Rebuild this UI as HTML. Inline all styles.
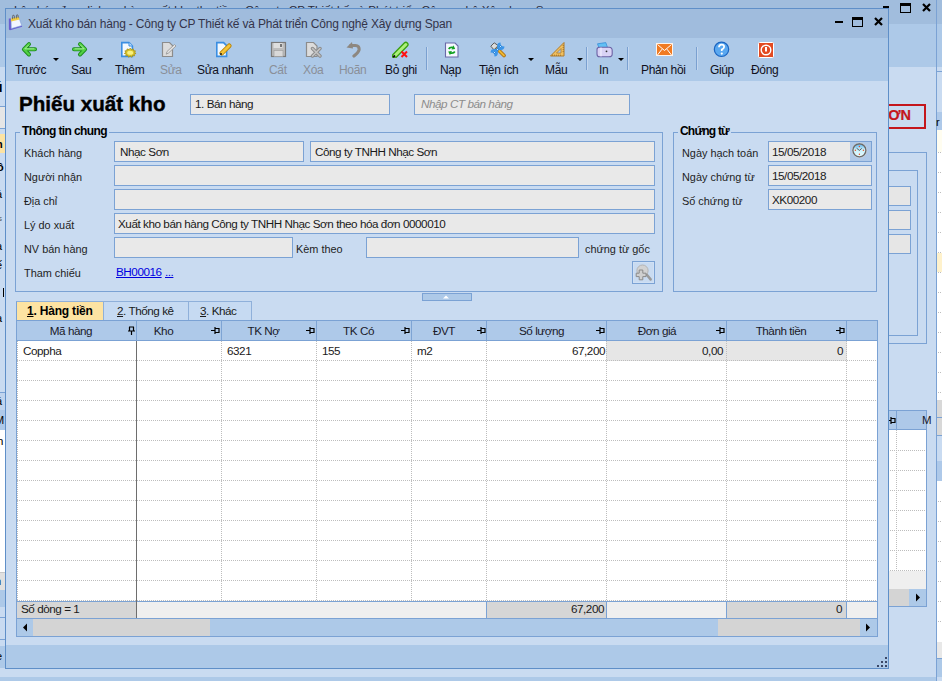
<!DOCTYPE html>
<html><head><meta charset="utf-8">
<style>
*{box-sizing:border-box;margin:0;padding:0}
html,body{width:942px;height:681px;overflow:hidden;background:#c9dbf1;font-family:"Liberation Sans",sans-serif;font-size:11.3px;color:#1a1a1a}
.a{position:absolute}
.t{position:absolute;white-space:nowrap;line-height:1}
.fld{position:absolute;background:#e9e9e9;border:1px solid #7ba2d4}
.lbl{position:absolute;white-space:nowrap;line-height:1;font-size:10.9px;color:#1e1e1e}
.tb{position:absolute;white-space:nowrap;line-height:1;font-size:12px;letter-spacing:-0.35px;color:#10101c;text-align:center;margin-top:0px}
.dis{color:#8a8f98}
.dd{position:absolute;width:0;height:0;border-left:3px solid transparent;border-right:3px solid transparent;border-top:3px solid #000}
.sep{position:absolute;width:2px;background:#7aa0d0;border-right:1px solid #c4d7ef}
.hd{position:absolute;top:321px;height:19px;background:#aec9e9;border-right:1px solid #7da3d4;text-align:center;font-size:10.9px;line-height:19px;color:#1a1a2a}
.pin{position:absolute;top:7px;width:8px;height:6px}
.vl{position:absolute;width:1px;top:341px;height:260px;background-image:linear-gradient(#bdbdbd 50%,transparent 50%);background-size:1px 2px}
.hl{position:absolute;left:17px;width:860px;height:1px;background-image:linear-gradient(90deg,#bdbdbd 50%,transparent 50%);background-size:2px 1px}
</style></head><body>

<!-- ===== background app ===== -->
<div class="a" style="left:0;top:0;width:942px;height:24px;background:#a1bddd"></div>
<div class="a" style="left:0;top:24px;width:942px;height:43px;background:#adc9e8"></div>
<div class="a" style="left:0;top:67px;width:942px;height:614px;background:#c9dbf1"></div>
<div class="a" style="left:936px;top:0px;width:1px;height:681px;background:#7ba2d4"></div>


<div class="t" style="left:14px;top:4px;font-size:11.7px;color:#2a2a3a">Lập hóa đơn dịch vụ kèm xuất kho thu tiền - Công ty CP Thiết kế và Phát triển Công nghệ Xây dựng Span</div>
<!-- bg app title buttons -->
<div class="a" style="left:883px;top:6px;width:6px;height:2px;background:#000"></div>
<div class="a" style="left:900px;top:3px;width:11px;height:10px;border:1px solid #000;border-top:3px solid #000"></div>
<svg class="a" style="left:922px;top:3px" width="9" height="9" viewBox="0 0 9 9"><path d="M1 1L8 8M8 1L1 8" stroke="#000" stroke-width="2.2"/></svg>
<!-- bg right content -->
<div class="a" style="left:888px;top:104px;width:38px;height:25px;border:2px solid #c4161c;border-left:none"></div>
<div class="t" style="left:851px;top:108px;width:60px;text-align:right;font-size:14.5px;font-weight:bold;color:#c4161c;-webkit-text-stroke:0.2px #c4161c">ĐƠN</div>
<div class="a" style="left:888px;top:152px;width:39px;height:192px;border:1px solid #7ba2d4;border-left:none"></div>
<div class="a" style="left:888px;top:170px;width:30px;height:166px;border:1px solid #7ba2d4;border-left:none"></div>
<div class="a" style="left:888px;top:186px;width:23px;height:20px;background:#e6e6e6;border:1px solid #7ba2d4;border-left:none"></div>
<div class="a" style="left:888px;top:210px;width:23px;height:20px;background:#e6e6e6;border:1px solid #7ba2d4;border-left:none"></div>
<div class="a" style="left:888px;top:234px;width:23px;height:20px;background:#e6e6e6;border:1px solid #7ba2d4;border-left:none"></div>
<div class="a" style="left:888px;top:410px;width:39px;height:197px;border:1px solid #7ba2d4;border-left:none;background:#fff"></div>
<div class="a" style="left:888px;top:411px;width:38px;height:19px;background:#aec9e9;border-bottom:1px solid #7ba2d4"></div>
<div class="a" style="left:896px;top:411px;width:1px;height:19px;background:#7ea4d4"></div>
<svg class="a" style="left:888px;top:417px" width="8" height="7" viewBox="0 0 8 7"><path d="M7 1V6M7 1.5H3V5.5H7M3 0V7M3 3.5H0" fill="none" stroke="#000" stroke-width="1.2"/></svg>
<div class="t" style="left:922px;top:415px;font-size:11.5px;color:#1a1a2a">M</div>
<div class="vl" style="left:896px;top:430px;height:141px"></div>
<div class="a" style="left:888px;top:450px;width:38px;height:1px;background-image:linear-gradient(90deg,#bdbdbd 50%,transparent 50%);background-size:2px 1px"></div>
<div class="a" style="left:888px;top:470px;width:38px;height:1px;background-image:linear-gradient(90deg,#bdbdbd 50%,transparent 50%);background-size:2px 1px"></div>
<div class="a" style="left:888px;top:490px;width:38px;height:1px;background-image:linear-gradient(90deg,#bdbdbd 50%,transparent 50%);background-size:2px 1px"></div>
<div class="a" style="left:888px;top:510px;width:38px;height:1px;background-image:linear-gradient(90deg,#bdbdbd 50%,transparent 50%);background-size:2px 1px"></div>
<div class="a" style="left:888px;top:530px;width:38px;height:1px;background-image:linear-gradient(90deg,#bdbdbd 50%,transparent 50%);background-size:2px 1px"></div>
<div class="a" style="left:888px;top:550px;width:38px;height:1px;background-image:linear-gradient(90deg,#bdbdbd 50%,transparent 50%);background-size:2px 1px"></div>
<div class="a" style="left:888px;top:570px;width:38px;height:1px;background-image:linear-gradient(90deg,#bdbdbd 50%,transparent 50%);background-size:2px 1px"></div>
<div class="a" style="left:888px;top:571px;width:38px;height:18px;background:#efefef"></div>
<div class="a" style="left:888px;top:589px;width:38px;height:17px;background:#adc9e8"></div>
<div class="a" style="left:888px;top:589px;width:21px;height:17px;background:#d4d4d4"></div>
<svg class="a" style="left:915px;top:593px" width="6" height="9" viewBox="0 0 6 9"><path d="M1 0.5V8.5L5 4.5Z" fill="#000"/></svg>
<!-- far right strip -->
<div class="a" style="left:937px;top:71px;width:5px;height:1px;background:#7ba2d4"></div>
<div class="a" style="left:937px;top:112px;width:5px;height:18px;background:#aec9e9"></div>
<div class="t" style="left:936px;top:117px;font-size:11px;color:#000">r</div>
<div class="a" style="left:937px;top:130px;width:5px;height:270px;background:#fff"></div>
<div class="a" style="left:937px;top:130px;width:5px;height:22px;background:#fffdf0"></div>
<div class="a" style="left:937px;top:253px;width:5px;height:19px;background:#fff2cc"></div>
<div class="a" style="left:937px;top:400px;width:5px;height:17px;background:#d8d8d8"></div>
<div class="a" style="left:937px;top:417px;width:5px;height:1px;background:#7ba2d4"></div>
<div class="a" style="left:937px;top:418px;width:5px;height:17px;background:#d8d8d8"></div>
<div class="a" style="left:937px;top:435px;width:5px;height:1px;background:#7ba2d4"></div>
<div class="a" style="left:937px;top:461px;width:5px;height:20px;background:#aec9e9"></div>
<div class="a" style="left:937px;top:481px;width:5px;height:161px;background:#fff"></div>
<div class="a" style="left:937px;top:642px;width:5px;height:16px;background:#e8e8e8"></div>
<div class="a" style="left:937px;top:658px;width:5px;height:23px;background:#adc9e8"></div>
<div class="a" style="left:938px;top:152px;width:4px;height:1px;background-image:linear-gradient(90deg,#bdbdbd 50%,transparent 50%);background-size:2px 1px"></div><div class="a" style="left:938px;top:172px;width:4px;height:1px;background-image:linear-gradient(90deg,#bdbdbd 50%,transparent 50%);background-size:2px 1px"></div><div class="a" style="left:938px;top:192px;width:4px;height:1px;background-image:linear-gradient(90deg,#bdbdbd 50%,transparent 50%);background-size:2px 1px"></div><div class="a" style="left:938px;top:212px;width:4px;height:1px;background-image:linear-gradient(90deg,#bdbdbd 50%,transparent 50%);background-size:2px 1px"></div><div class="a" style="left:938px;top:232px;width:4px;height:1px;background-image:linear-gradient(90deg,#bdbdbd 50%,transparent 50%);background-size:2px 1px"></div><div class="a" style="left:938px;top:252px;width:4px;height:1px;background-image:linear-gradient(90deg,#bdbdbd 50%,transparent 50%);background-size:2px 1px"></div><div class="a" style="left:938px;top:272px;width:4px;height:1px;background-image:linear-gradient(90deg,#bdbdbd 50%,transparent 50%);background-size:2px 1px"></div><div class="a" style="left:938px;top:292px;width:4px;height:1px;background-image:linear-gradient(90deg,#bdbdbd 50%,transparent 50%);background-size:2px 1px"></div><div class="a" style="left:938px;top:312px;width:4px;height:1px;background-image:linear-gradient(90deg,#bdbdbd 50%,transparent 50%);background-size:2px 1px"></div><div class="a" style="left:938px;top:332px;width:4px;height:1px;background-image:linear-gradient(90deg,#bdbdbd 50%,transparent 50%);background-size:2px 1px"></div><div class="a" style="left:938px;top:352px;width:4px;height:1px;background-image:linear-gradient(90deg,#bdbdbd 50%,transparent 50%);background-size:2px 1px"></div><div class="a" style="left:938px;top:372px;width:4px;height:1px;background-image:linear-gradient(90deg,#bdbdbd 50%,transparent 50%);background-size:2px 1px"></div><div class="a" style="left:938px;top:392px;width:4px;height:1px;background-image:linear-gradient(90deg,#bdbdbd 50%,transparent 50%);background-size:2px 1px"></div><div class="a" style="left:938px;top:501px;width:4px;height:1px;background-image:linear-gradient(90deg,#bdbdbd 50%,transparent 50%);background-size:2px 1px"></div><div class="a" style="left:938px;top:521px;width:4px;height:1px;background-image:linear-gradient(90deg,#bdbdbd 50%,transparent 50%);background-size:2px 1px"></div><div class="a" style="left:938px;top:541px;width:4px;height:1px;background-image:linear-gradient(90deg,#bdbdbd 50%,transparent 50%);background-size:2px 1px"></div><div class="a" style="left:938px;top:561px;width:4px;height:1px;background-image:linear-gradient(90deg,#bdbdbd 50%,transparent 50%);background-size:2px 1px"></div><div class="a" style="left:938px;top:581px;width:4px;height:1px;background-image:linear-gradient(90deg,#bdbdbd 50%,transparent 50%);background-size:2px 1px"></div><div class="a" style="left:938px;top:601px;width:4px;height:1px;background-image:linear-gradient(90deg,#bdbdbd 50%,transparent 50%);background-size:2px 1px"></div><div class="a" style="left:938px;top:621px;width:4px;height:1px;background-image:linear-gradient(90deg,#bdbdbd 50%,transparent 50%);background-size:2px 1px"></div>
<!-- below dialog -->
<div class="a" style="left:0;top:677px;width:937px;height:4px;background:#adc9e8"></div>
<div class="a" style="left:936px;top:677px;width:1px;height:4px;background:#7ba2d4"></div>
<div class="a" style="left:937px;top:658px;width:5px;height:1px;background:#7ba2d4"></div>
<div class="a" style="left:937px;top:677px;width:5px;height:4px;background:#c9dbf1"></div>




<!-- left strip bg -->
<div class="t" style="left:-6px;top:80px;font-size:14px;font-weight:bold;color:#000">ú</div>
<div class="a" style="left:0;top:106px;width:5px;height:23px;background:#e6e6e6;border-top:1px solid #7ba2d4;border-bottom:1px solid #7ba2d4"></div>
<div class="a" style="left:0;top:134px;width:5px;height:19px;background:#fde3a2"></div>
<div class="t" style="left:-4px;top:139px;font-size:11px;font-weight:bold;color:#000">n</div>
<div class="t" style="left:-3px;top:162px;font-size:11px;font-weight:bold;color:#000">ô</div>
<div class="t" style="left:-4px;top:189px;font-size:11px;color:#000">á</div>
<div class="t" style="left:-2px;top:215px;font-size:8px;color:#555">s</div>
<div class="t" style="left:-4px;top:241px;font-size:11px;color:#000">a</div>
<div class="t" style="left:-4px;top:260px;font-size:11px;color:#000">ế</div>
<div class="a" style="left:3px;top:288px;width:1px;height:9px;background:#000"></div>
<div class="t" style="left:-4px;top:313px;font-size:11px;color:#000">a</div>
<div class="a" style="left:0;top:392px;width:5px;height:1px;background:#7ba2d4"></div>
<div class="a" style="left:0;top:393px;width:5px;height:17px;background:#c0d4ee"></div>
<div class="t" style="left:-4px;top:396px;font-size:11px;color:#000">ầ</div>
<div class="a" style="left:0;top:410px;width:5px;height:20px;background:#aec9e9"></div>
<div class="t" style="left:-5px;top:415px;font-size:11px;color:#000">M</div>
<div class="a" style="left:0;top:430px;width:5px;height:142px;background:#fff"></div>
<div class="t" style="left:-3px;top:436px;font-size:11.5px;color:#000">h</div>
<div class="a" style="left:0;top:572px;width:5px;height:18px;background:#e0e0e0;border-top:1px solid #c8c8c8"></div>
<div class="t" style="left:-5px;top:576px;font-size:11px;color:#000">n</div>
<div class="a" style="left:0;top:590px;width:5px;height:17px;background:#adc9e8"></div>
<div class="a" style="left:0;top:617px;width:5px;height:1px;background:#7ba2d4"></div>
<div class="a" style="left:0;top:639px;width:5px;height:1px;background:#7ba2d4"></div>
<div class="a" style="left:0;top:646px;width:5px;height:22px;background:#adc9e8"></div>
<div class="t" style="left:-4px;top:651px;font-size:11px;color:#000">e</div>

<!-- ===== dialog ===== -->
<div class="a" style="left:5px;top:8px;width:884px;height:661px;border:1px solid #5f8fc8;background:#c9dbf1"></div>
<div class="a" style="left:6px;top:9px;width:882px;height:29px;background:#a0bcdd"></div>
<div class="a" style="left:6px;top:38px;width:882px;height:43px;background:#adc9e8"></div>
<div class="a" style="left:6px;top:645px;width:882px;height:23px;background:#adc9e8"></div>

<div class="t" style="left:28px;top:18px;font-size:12px;letter-spacing:-0.18px;color:#34344a">Xuất kho bán hàng - Công ty CP Thiết kế và Phát triển Công nghệ Xây dựng Span</div>


<!-- title icon -->
<svg class="a" style="left:8px;top:14px" width="17" height="17" viewBox="0 0 17 17"><path d="M0.8 4.6L3 4.4L3.3 14.6L13.8 11.6L14.2 12.8L2 16.2L0.9 15.6Z" fill="#6a5ed0"/><path d="M3 4.4L10.6 2.8L13.8 11.6L3.3 14.6Z" fill="#f2f6ff" stroke="#7a9ad8" stroke-width=".6"/><path d="M3 4.4L10.6 2.8L11.6 5.6L3.1 7.4Z" fill="#f2cc40"/><path d="M4.6 5.2V2.4Q4.6 .8 5.8 1.2Q6.6 1.5 6.4 4.5M8.4 4.4V1.8Q8.6 .4 9.7 .9Q10.3 1.3 10.2 3.8" fill="none" stroke="#606060" stroke-width=".9"/></svg>
<!-- title buttons -->
<div class="a" style="left:835px;top:21px;width:8px;height:2px;background:#000"></div>
<div class="a" style="left:852px;top:17px;width:11px;height:10px;border:1px solid #000;border-top:3px solid #000"></div>
<svg class="a" style="left:874px;top:17px" width="9" height="9" viewBox="0 0 9 9"><path d="M1 1L8 8M8 1L1 8" stroke="#000" stroke-width="2.2"/></svg>

<!-- toolbar icons -->
<svg class="a" style="left:21px;top:41px" width="17" height="17" viewBox="0 0 17 17"><path d="M8 3.1L2.9 8.3L8 13.5M3.4 8.3H14" fill="none" stroke="#1c8a1c" stroke-width="4" stroke-linecap="round" stroke-linejoin="round"/><path d="M8 3.1L2.9 8.3L8 13.5M3.4 8.3H14" fill="none" stroke="#52d043" stroke-width="2.2" stroke-linecap="round" stroke-linejoin="round"/><path d="M7.6 4L3.8 7.8H13" fill="none" stroke="#b8f5a8" stroke-width=".8" stroke-linecap="round"/></svg>
<div class="dd" style="left:53px;top:58px"></div>
<svg class="a" style="left:71px;top:41px" width="17" height="17" viewBox="0 0 17 17"><path d="M9 3.1L14.1 8.3L9 13.5M13.6 8.3H3" fill="none" stroke="#1c8a1c" stroke-width="4" stroke-linecap="round" stroke-linejoin="round"/><path d="M9 3.1L14.1 8.3L9 13.5M13.6 8.3H3" fill="none" stroke="#52d043" stroke-width="2.2" stroke-linecap="round" stroke-linejoin="round"/><path d="M9.4 4L13.2 7.8H4" fill="none" stroke="#b8f5a8" stroke-width=".8" stroke-linecap="round"/></svg>
<div class="dd" style="left:97px;top:58px"></div>

<svg class="a" style="left:120px;top:41px" width="17" height="17" viewBox="0 0 17 17"><path d="M1.8 1.6H9L12.4 5V15.4H1.8Z" fill="#f2f8ff" stroke="#3a8ee2" stroke-width="1.6"/><path d="M9 1.6V5H12.4" fill="#cfe3f8" stroke="#3a8ee2" stroke-width="1"/><path d="M10.20 7.20L11.40 8.62L13.39 7.93L13.41 9.63L15.57 9.89L14.40 11.33L16.04 12.45L14.06 13.18L14.66 14.81L12.50 14.59L11.86 16.21L10.20 15.11L8.54 16.21L7.90 14.59L5.74 14.81L6.34 13.18L4.36 12.45L6.00 11.33L4.83 9.89L6.99 9.63L7.01 7.93L9.00 8.62Z" fill="#d8c428" stroke="#a89010" stroke-width=".8"/><ellipse cx="10.2" cy="11.8" rx="3" ry="2" fill="#f8f080"/></svg>
<svg class="a" style="left:161px;top:41px" width="17" height="17" viewBox="0 0 17 17"><path d="M1.5 1.5H8.5L11.5 4.5V15.5H1.5Z" fill="#dcdcdc" stroke="#8c8c8c" stroke-width="1.2"/><path d="M5.2 13.2L6 10.5L13.5 3.5L15 5L7.5 12Z" fill="#e4e4e4" stroke="#9a9a9a" stroke-width=".9"/></svg>
<svg class="a" style="left:215px;top:41px" width="17" height="17" viewBox="0 0 17 17"><path d="M1.8 1.6H8.6L11.6 4.6V15.4H1.8Z" fill="#f2f8ff" stroke="#3a8ee2" stroke-width="1.6"/><path d="M6.8 12.2L14.2 4.8" stroke="#b88000" stroke-width="4.6" stroke-linecap="round"/><path d="M6.8 12.2L14.2 4.8" stroke="#f4c43a" stroke-width="3" stroke-linecap="round"/><circle cx="6" cy="13" r="1" fill="#222"/></svg>
<svg class="a" style="left:270px;top:41px" width="17" height="17" viewBox="0 0 17 17"><rect x="1.5" y="1.5" width="14" height="14" fill="#bdbdbd" stroke="#7a7a7a" stroke-width="1.2"/><rect x="3.5" y="2" width="9" height="5" fill="#dedede"/><rect x="10" y="3" width="2" height="3" fill="#777"/><rect x="4" y="9.5" width="9" height="6" fill="#d9d9d9" stroke="#9c9c9c" stroke-width=".6"/></svg>
<svg class="a" style="left:305px;top:41px" width="17" height="17" viewBox="0 0 17 17"><path d="M1.5 1.5H8.5L12 5V15.5H1.5Z" fill="#dcdcdc" stroke="#8c8c8c" stroke-width="1.2"/><path d="M7.5 7.5L15 15M15 7.5L7.5 15" stroke="#8a8a8a" stroke-width="3.4" stroke-linecap="round"/><path d="M7.5 7.5L15 15M15 7.5L7.5 15" stroke="#c4c4c4" stroke-width="1.6" stroke-linecap="round"/></svg>
<svg class="a" style="left:345px;top:41px" width="17" height="17" viewBox="0 0 17 17"><path d="M5.5 4.5H10.5Q14.5 4.5 14 9Q13.5 11.5 9 15" fill="none" stroke="#8d8780" stroke-width="3.2" stroke-linecap="round"/><path d="M7 1L1.5 6.5L8 7.5Z" fill="#8d8780"/></svg>
<svg class="a" style="left:392px;top:41px" width="17" height="17" viewBox="0 0 17 17"><path d="M2.5 15L13.8 3.5" stroke="#3aa010" stroke-width="5.6" stroke-linecap="round"/><path d="M2.5 15L13.8 3.5" stroke="#aef07a" stroke-width="3" stroke-linecap="round"/><path d="M1.2 16.2L3 14.5" stroke="#111" stroke-width="2"/><path d="M9.5 10.5L15 16M15 10.5L9.5 16" stroke="#ff1010" stroke-width="2"/></svg>
<div class="sep" style="left:426px;top:47px;height:23px"></div>

<svg class="a" style="left:444px;top:42px" width="16" height="16" viewBox="0 0 16 16"><path d="M1.5 1H11L14 4V15H1.5Z" fill="#f4f8ff" stroke="#6a6aa8" stroke-width="1.1"/><path d="M4 6.5Q5 4 9 4.5L9.5 3.2L11.2 7L7.5 7.5L8.3 6.3Q6 6 5.5 7.5Z" fill="#10a020"/><path d="M11.5 10Q10.5 12.5 6.5 12L6 13.3L4.2 9.5L8 9L7.2 10.3Q9.5 10.6 10 9Z" fill="#10a020"/></svg>
<svg class="a" style="left:489px;top:41px" width="18" height="17" viewBox="0 0 18 17"><path d="M5.5 5L15 14.5" stroke="#a86c10" stroke-width="3.6" stroke-linecap="round"/><path d="M5.5 5L15 14.5" stroke="#f0b830" stroke-width="1.8" stroke-linecap="round"/><path d="M1.8 5.2L5.2 1.8L9.2 4.6L5 8.8Z" fill="#dcdcdc" stroke="#5a5a5a" stroke-width="1"/><path d="M4.5 12.5L12.5 4.5" stroke="#2a84dc" stroke-width="3"/><path d="M4.8 12.2L12.2 4.8" stroke="#c8ecff" stroke-width="1"/><path d="M11.6 2.6A2.6 2.6 0 1 0 14.4 5.4" fill="none" stroke="#3a94e8" stroke-width="2.2"/><path d="M5.4 14.4A2.6 2.6 0 1 0 2.6 11.6" fill="none" stroke="#3a94e8" stroke-width="2.2"/></svg>
<div class="dd" style="left:528px;top:58px"></div>
<svg class="a" style="left:549px;top:41px" width="17" height="17" viewBox="0 0 17 17"><path d="M15 1.5V15H1.5Z" fill="#f0c060" stroke="#b07a28" stroke-width="1"/><path d="M12 7.5V12H7.5Z" fill="#adc9e8" stroke="#b07a28" stroke-width=".8"/><path d="M3 14.2h1M5 14.2h1M7 14.2h1M9 14.2h1M11 14.2h1M14.2 4v1M14.2 6v1M14.2 8v1M14.2 10v1" stroke="#9a6a20" stroke-width=".9"/></svg>
<div class="dd" style="left:577px;top:58px"></div>
<div class="sep" style="left:586px;top:47px;height:23px"></div>
<svg class="a" style="left:596px;top:42px" width="17" height="16" viewBox="0 0 17 16"><path d="M1.5 1.8L9.8 0.6L11.5 5.5L3.2 6.5Z" fill="#62c0f4" stroke="#3a8ed8" stroke-width=".8"/><path d="M1 7.5Q1 5.2 3.5 5.2H13Q16.2 5.2 16.2 8.5V12Q16.2 14.8 13 14.8H3.5Q1 14.8 1 12Z" fill="#d9d3f5" stroke="#6c62a4" stroke-width="1.1"/><path d="M5 5.5V14.5" stroke="#f4f2ff" stroke-width="1"/><circle cx="10.5" cy="9.3" r=".9" fill="#333"/></svg>
<div class="dd" style="left:618px;top:58px"></div>
<div class="sep" style="left:627px;top:47px;height:23px"></div>
<svg class="a" style="left:656px;top:43px" width="17" height="14" viewBox="0 0 17 14"><rect x="0.5" y="0.5" width="16" height="12" fill="#f07a22" stroke="#fff3e8" stroke-width="1"/><path d="M1.5 1.5L8.5 7.5L15.5 1.5M1.5 12L6 6.2M15.5 12L11 6.2" fill="none" stroke="#fff" stroke-width="1"/></svg>
<div class="sep" style="left:696px;top:47px;height:23px"></div>
<svg class="a" style="left:713px;top:41px" width="17" height="17" viewBox="0 0 17 17"><circle cx="8.5" cy="8.3" r="7.2" fill="#5aa8f0" stroke="#1a64c0" stroke-width="1.2"/><path d="M6 6.3Q6 3.6 8.6 3.6Q11.2 3.6 11.1 6Q11 7.5 8.8 8.6V10" fill="none" stroke="#fff" stroke-width="1.8"/><circle cx="8.8" cy="12.6" r="1.1" fill="#fff"/></svg>
<svg class="a" style="left:758px;top:42px" width="16" height="16" viewBox="0 0 16 16"><rect x="0.5" y="0.5" width="15" height="15" rx="1" fill="#e24a22" stroke="#fff" stroke-width="1"/><circle cx="8" cy="8" r="4.8" fill="none" stroke="#fff" stroke-width="1.4"/><rect x="7" y="5" width="2" height="4.5" fill="#fff"/></svg>

<!-- toolbar labels -->
<div class="tb" style="left:15px;top:64px">Trước</div>
<div class="tb" style="left:71px;top:64px">Sau</div>
<div class="tb" style="left:115px;top:64px">Thêm</div>
<div class="tb dis" style="left:160px;top:64px">Sửa</div>
<div class="tb" style="left:197px;top:64px">Sửa nhanh</div>
<div class="tb dis" style="left:269px;top:64px">Cất</div>
<div class="tb dis" style="left:303px;top:64px">Xóa</div>
<div class="tb dis" style="left:339px;top:64px">Hoãn</div>
<div class="tb" style="left:385px;top:64px">Bỏ ghi</div>
<div class="tb" style="left:440px;top:64px">Nạp</div>
<div class="tb" style="left:479px;top:64px">Tiện ích</div>
<div class="tb" style="left:545px;top:64px">Mẫu</div>
<div class="tb" style="left:599px;top:64px">In</div>
<div class="tb" style="left:641px;top:64px">Phản hồi</div>
<div class="tb" style="left:710px;top:64px">Giúp</div>
<div class="tb" style="left:751px;top:64px">Đóng</div>


<!-- header -->
<div class="t" style="left:19px;top:94px;font-size:20.6px;font-weight:bold;color:#000;-webkit-text-stroke:0.4px #000">Phiếu xuất kho</div>
<div class="fld" style="left:190px;top:94px;width:200px;height:21px"></div>
<div class="t" style="left:195px;top:98px;font-size:11.7px;letter-spacing:-0.45px;color:#1a1a1a">1. Bán hàng</div>
<div class="fld" style="left:414px;top:94px;width:216px;height:21px"></div>
<div class="t" style="left:421px;top:98px;font-size:11.7px;letter-spacing:-0.45px;font-style:italic;color:#8c8c8c">Nhập CT bán hàng</div>

<!-- group: Thong tin chung -->
<div class="a" style="left:15px;top:132px;width:648px;height:160px;border:1px solid #7ba2d4"></div>
<div class="t" style="left:20px;top:125px;padding:0 2px;background:#c9dbf1;font-size:12px;letter-spacing:-0.6px;font-weight:bold;color:#000">Thông tin chung</div>

<div class="lbl" style="left:24px;top:148px">Khách hàng</div>
<div class="lbl" style="left:24px;top:172px">Người nhận</div>
<div class="lbl" style="left:24px;top:196px">Địa chỉ</div>
<div class="lbl" style="left:24px;top:220px">Lý do xuất</div>
<div class="lbl" style="left:24px;top:244px">NV bán hàng</div>
<div class="lbl" style="left:24px;top:268px">Tham chiếu</div>

<div class="fld" style="left:114px;top:141px;width:190px;height:21px"></div>
<div class="t" style="left:120px;top:146px;font-size:11.7px;letter-spacing:-0.45px">Nhạc Sơn</div>
<div class="fld" style="left:310px;top:141px;width:345px;height:21px"></div>
<div class="t" style="left:315px;top:146px;font-size:11.7px;letter-spacing:-0.45px">Công ty TNHH Nhạc Sơn</div>
<div class="fld" style="left:114px;top:165px;width:541px;height:21px"></div>
<div class="fld" style="left:114px;top:189px;width:541px;height:21px"></div>
<div class="fld" style="left:114px;top:213px;width:541px;height:21px"></div>
<div class="t" style="left:118px;top:218px;font-size:11.7px;letter-spacing:-0.45px">Xuất kho bán hàng Công ty TNHH Nhạc Sơn theo hóa đơn 0000010</div>
<div class="fld" style="left:114px;top:237px;width:179px;height:21px"></div>
<div class="lbl" style="left:296px;top:244px">Kèm theo</div>
<div class="fld" style="left:366px;top:237px;width:213px;height:21px"></div>
<div class="lbl" style="left:585px;top:244px">chứng từ gốc</div>
<div class="t" style="left:116px;top:266px;font-size:11.7px;letter-spacing:-0.45px;color:#0000e0;text-decoration:underline">BH00016</div>
<div class="t" style="left:165px;top:266px;font-size:11.7px;letter-spacing:-0.45px;color:#0000e0;text-decoration:underline">...</div>
<div class="a" style="left:632px;top:261px;width:23px;height:23px;border:1px solid #7ba2d4;background:#c9dbf1"></div>
<svg class="a" style="left:632px;top:261px" width="23" height="23" viewBox="0 0 23 23"><rect x="1.5" y="1.5" width="20" height="20" fill="none" stroke="#d0e0f4" stroke-width="1"/><circle cx="10.5" cy="9.6" r="5.6" fill="#d2d2d2" stroke="#b4b4b4" stroke-width="1"/><path d="M15 14L18.6 18.4" stroke="#9a9a9a" stroke-width="2.6" stroke-linecap="round"/><path d="M7.2 9H10.8V12.2H14V15.6H10.8V18.8H7.2V15.6H4.2V12.2H7.2Z" fill="#cfcfcf" stroke="#8a8a8a" stroke-width="1"/></svg>

<!-- group: Chung tu -->
<div class="a" style="left:673px;top:132px;width:204px;height:160px;border:1px solid #7ba2d4"></div>
<div class="t" style="left:678px;top:125px;padding:0 2px;background:#c9dbf1;font-size:12px;letter-spacing:-0.8px;font-weight:bold;color:#000">Chứng từ</div>
<div class="lbl" style="left:682px;top:148px">Ngày hạch toán</div>
<div class="lbl" style="left:682px;top:172px">Ngày chứng từ</div>
<div class="lbl" style="left:682px;top:196px">Số chứng từ</div>
<div class="fld" style="left:768px;top:141px;width:104px;height:21px"></div>
<div class="a" style="left:850px;top:142px;width:21px;height:19px;background:#b0c9e8"></div>
<svg class="a" style="left:851px;top:142px" width="17" height="17" viewBox="0 0 17 17"><defs><linearGradient id="cf" x1="0" y1="0" x2="0" y2="1"><stop offset="0" stop-color="#5ab0ec"/><stop offset=".45" stop-color="#c8f0fa"/><stop offset="1" stop-color="#e8fcff"/></linearGradient></defs><circle cx="8.4" cy="8.3" r="6.6" fill="url(#cf)" stroke="#6a6a6a" stroke-width="1.5"/><circle cx="8.4" cy="8.3" r="7.5" fill="none" stroke="#d8d8d8" stroke-width=".5"/><g fill="#f04a20"><circle cx="8.4" cy="4.5" r=".7"/><circle cx="8.4" cy="12.3" r=".7"/><circle cx="4.4" cy="8.3" r=".7"/><circle cx="12.4" cy="8.3" r=".7"/></g><path d="M5.6 6.2L8.4 8.4L10.8 6.4" fill="none" stroke="#505050" stroke-width=".9"/></svg>
<div class="t" style="left:772px;top:146px;font-size:11.7px;letter-spacing:-0.45px">15/05/2018</div>
<div class="fld" style="left:768px;top:165px;width:104px;height:21px"></div>
<div class="t" style="left:772px;top:170px;font-size:11.7px;letter-spacing:-0.45px">15/05/2018</div>
<div class="fld" style="left:768px;top:189px;width:104px;height:21px"></div>
<div class="t" style="left:772px;top:194px;font-size:11.7px;letter-spacing:-0.45px">XK00200</div>

<!-- collapse handle -->
<div class="a" style="left:422px;top:293px;width:50px;height:8px;border:1px solid #7ba2d4;background:#adc9e8"></div>
<svg class="a" style="left:442px;top:294px" width="8" height="5" viewBox="0 0 8 5"><path d="M1 4.5L4 1.5L7 4.5Z" fill="#fff"/></svg>


<!-- tabs -->
<div class="a" style="left:16px;top:301px;width:88px;height:20px;background:#fde3a2;border-left:1px solid #7ba2d4;border-top:1px solid #8fb0da"></div>
<div class="a" style="left:103px;top:301px;width:86px;height:20px;background:#c6daf2;border:1px solid #8fb0da;border-bottom:none"></div>
<div class="a" style="left:188px;top:301px;width:64px;height:20px;background:#c6daf2;border:1px solid #8fb0da;border-bottom:none"></div>
<div class="t" style="left:27px;top:305px;font-size:12px;letter-spacing:-0.2px;font-weight:bold;color:#000"><u>1</u>. Hàng tiền</div>
<div class="t" style="left:117px;top:305px;font-size:11.7px;letter-spacing:-0.45px;color:#1a1a1a"><u>2</u>. Thống kê</div>
<div class="t" style="left:200px;top:305px;font-size:11.7px;letter-spacing:-0.45px;color:#1a1a1a"><u>3</u>. Khác</div>

<!-- grid -->
<div class="a" style="left:16px;top:320px;width:862px;height:317px;border:1px solid #7ba2d4;background:#adc9e8"></div>
<div class="a" style="left:17px;top:321px;width:860px;height:20px;background:#aec9e9;border-bottom:1px solid #7ba2d4"></div>
<div class="a" style="left:17px;top:341px;width:860px;height:260px;background:#fff"></div>
<div class="a" style="left:606px;top:341px;width:241px;height:20px;background:#e6e6e6"></div>
<div class="a" style="left:136px;top:321px;width:1px;height:20px;background:#7ea4d4"></div>
<div class="t" style="left:17px;top:325px;width:108px;text-align:center;font-size:11.7px;letter-spacing:-0.45px;color:#1a1a2a">Mã hàng</div>
<svg class="a" style="left:128px;top:326px" width="7" height="9" viewBox="0 0 7 9"><path d="M1 1H6M1.5 1V5H5.5V1M0 5H7M3.5 5V9" fill="none" stroke="#000" stroke-width="1.2"/></svg>
<div class="a" style="left:221px;top:321px;width:1px;height:20px;background:#7ea4d4"></div>
<div class="t" style="left:127px;top:325px;width:73px;text-align:center;font-size:11.7px;letter-spacing:-0.45px;color:#1a1a2a">Kho</div>
<svg class="a" style="left:211px;top:327px" width="9" height="7" viewBox="0 0 9 7"><path d="M8 1V6M8 1.5H4V5.5H8M4 0V7M4 3.5H0" fill="none" stroke="#000" stroke-width="1.2"/></svg>
<div class="a" style="left:316px;top:321px;width:1px;height:20px;background:#7ea4d4"></div>
<div class="t" style="left:222px;top:325px;width:83px;text-align:center;font-size:11.7px;letter-spacing:-0.45px;color:#1a1a2a">TK Nợ</div>
<svg class="a" style="left:306px;top:327px" width="9" height="7" viewBox="0 0 9 7"><path d="M8 1V6M8 1.5H4V5.5H8M4 0V7M4 3.5H0" fill="none" stroke="#000" stroke-width="1.2"/></svg>
<div class="a" style="left:411px;top:321px;width:1px;height:20px;background:#7ea4d4"></div>
<div class="t" style="left:317px;top:325px;width:83px;text-align:center;font-size:11.7px;letter-spacing:-0.45px;color:#1a1a2a">TK Có</div>
<svg class="a" style="left:401px;top:327px" width="9" height="7" viewBox="0 0 9 7"><path d="M8 1V6M8 1.5H4V5.5H8M4 0V7M4 3.5H0" fill="none" stroke="#000" stroke-width="1.2"/></svg>
<div class="a" style="left:486px;top:321px;width:1px;height:20px;background:#7ea4d4"></div>
<div class="t" style="left:412px;top:325px;width:64px;text-align:center;font-size:11.7px;letter-spacing:-0.45px;color:#1a1a2a">ĐVT</div>
<svg class="a" style="left:477px;top:327px" width="9" height="7" viewBox="0 0 9 7"><path d="M8 1V6M8 1.5H4V5.5H8M4 0V7M4 3.5H0" fill="none" stroke="#000" stroke-width="1.2"/></svg>
<div class="a" style="left:606px;top:321px;width:1px;height:20px;background:#7ea4d4"></div>
<div class="t" style="left:488px;top:325px;width:107px;text-align:center;font-size:11.7px;letter-spacing:-0.45px;color:#1a1a2a">Số lượng</div>
<svg class="a" style="left:596px;top:327px" width="9" height="7" viewBox="0 0 9 7"><path d="M8 1V6M8 1.5H4V5.5H8M4 0V7M4 3.5H0" fill="none" stroke="#000" stroke-width="1.2"/></svg>
<div class="a" style="left:726px;top:321px;width:1px;height:20px;background:#7ea4d4"></div>
<div class="t" style="left:603px;top:325px;width:108px;text-align:center;font-size:11.7px;letter-spacing:-0.45px;color:#1a1a2a">Đơn giá</div>
<svg class="a" style="left:716px;top:327px" width="9" height="7" viewBox="0 0 9 7"><path d="M8 1V6M8 1.5H4V5.5H8M4 0V7M4 3.5H0" fill="none" stroke="#000" stroke-width="1.2"/></svg>
<div class="a" style="left:846px;top:321px;width:1px;height:20px;background:#7ea4d4"></div>
<div class="t" style="left:727px;top:325px;width:108px;text-align:center;font-size:11.7px;letter-spacing:-0.45px;color:#1a1a2a">Thành tiền</div>
<svg class="a" style="left:836px;top:327px" width="9" height="7" viewBox="0 0 9 7"><path d="M8 1V6M8 1.5H4V5.5H8M4 0V7M4 3.5H0" fill="none" stroke="#000" stroke-width="1.2"/></svg>
<div class="a" style="left:136px;top:341px;width:1px;height:260px;background:#6e6e6e"></div>
<div class="vl" style="left:17px"></div>
<div class="vl" style="left:221px"></div>
<div class="vl" style="left:316px"></div>
<div class="vl" style="left:411px"></div>
<div class="vl" style="left:486px"></div>
<div class="vl" style="left:606px"></div>
<div class="vl" style="left:726px"></div>
<div class="vl" style="left:846px"></div>
<div class="hl" style="top:360px"></div>
<div class="hl" style="top:380px"></div>
<div class="hl" style="top:400px"></div>
<div class="hl" style="top:420px"></div>
<div class="hl" style="top:440px"></div>
<div class="hl" style="top:460px"></div>
<div class="hl" style="top:480px"></div>
<div class="hl" style="top:500px"></div>
<div class="hl" style="top:520px"></div>
<div class="hl" style="top:540px"></div>
<div class="hl" style="top:560px"></div>
<div class="hl" style="top:580px"></div>
<div class="hl" style="top:600px"></div>

<div class="t" style="left:23px;top:345px;font-size:11.7px;letter-spacing:-0.45px">Coppha</div>
<div class="t" style="left:227px;top:345px;font-size:11.7px;letter-spacing:-0.45px">6321</div>
<div class="t" style="left:322px;top:345px;font-size:11.7px;letter-spacing:-0.45px">155</div>
<div class="t" style="left:417px;top:345px;font-size:11.7px;letter-spacing:-0.45px">m2</div>
<div class="t" style="left:500px;top:345px;width:105px;text-align:right;font-size:11.7px;letter-spacing:-0.45px">67,200</div>
<div class="t" style="left:620px;top:345px;width:103px;text-align:right;font-size:11.7px;letter-spacing:-0.45px">0,00</div>
<div class="t" style="left:740px;top:345px;width:103px;text-align:right;font-size:11.7px;letter-spacing:-0.45px">0</div>

<!-- footer -->
<div class="a" style="left:17px;top:601px;width:860px;height:17px;background:#7ba2d4"></div>
<div class="a" style="left:17px;top:602px;width:119px;height:16px;background:#d6d6d6"></div>
<div class="a" style="left:137px;top:602px;width:349px;height:16px;background:#efefef"></div>
<div class="a" style="left:487px;top:602px;width:119px;height:16px;background:#d6d6d6"></div>
<div class="a" style="left:607px;top:602px;width:119px;height:16px;background:#efefef"></div>
<div class="a" style="left:727px;top:602px;width:119px;height:16px;background:#d6d6d6"></div>
<div class="a" style="left:847px;top:602px;width:30px;height:16px;background:#efefef"></div>
<div class="a" style="left:136px;top:601px;width:1px;height:17px;background:#6e6e6e"></div>
<div class="a" style="left:17px;top:618px;width:860px;height:1px;background:#7ba2d4"></div>
<div class="t" style="left:21px;top:603px;font-size:11.7px;letter-spacing:-0.45px">Số dòng = 1</div>
<div class="t" style="left:499px;top:603px;width:105px;text-align:right;font-size:11.7px;letter-spacing:-0.45px">67,200</div>
<div class="t" style="left:739px;top:603px;width:103px;text-align:right;font-size:11.7px;letter-spacing:-0.45px">0</div>

<!-- scrollbar -->
<div class="a" style="left:17px;top:619px;width:860px;height:17px;background:#adc9e8"></div>
<div class="a" style="left:33px;top:619px;width:177px;height:17px;background:#d4d4d4"></div>
<div class="a" style="left:718px;top:619px;width:142px;height:17px;background:#d4d4d4"></div>
<svg class="a" style="left:22px;top:623px" width="6" height="9" viewBox="0 0 6 9"><path d="M5 0.5V8.5L1 4.5Z" fill="#000"/></svg>
<svg class="a" style="left:865px;top:623px" width="6" height="9" viewBox="0 0 6 9"><path d="M1 0.5V8.5L5 4.5Z" fill="#000"/></svg>

<!-- resize grip -->
<svg class="a" style="left:876px;top:656px" width="12" height="12" viewBox="0 0 12 12"><g fill="#3a4868"><rect x="9" y="1" width="2" height="2"/><rect x="5" y="5" width="2" height="2"/><rect x="9" y="5" width="2" height="2"/><rect x="1" y="9" width="2" height="2"/><rect x="5" y="9" width="2" height="2"/><rect x="9" y="9" width="2" height="2"/></g></svg>

</body></html>
